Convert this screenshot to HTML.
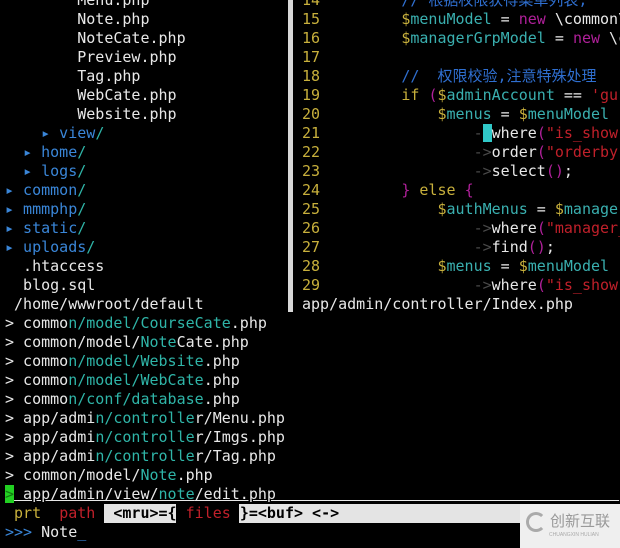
<!DOCTYPE html>
<html><head><meta charset="utf-8"><style>
body{margin:0;width:620px;height:547px;background:#000;overflow:hidden;position:relative;font-family:"DejaVu Sans Mono","Liberation Mono","Noto Sans CJK SC",monospace;font-size:15px;color:#e8e8e8}
#w{position:absolute;left:0;top:1px;width:620px;height:547px}
.r{position:absolute;height:19px;line-height:19px;white-space:pre}
.b{color:#3a86d8}.t{color:#2fb5a8}.y{color:#c8b03c}.m{color:#b0209a}.rd{color:#c0202a}.g{color:#4a4a4a}.c{color:#2f6fd0}.cy{color:#3ab0b0}
.ln{color:#c8b03c}
</style></head><body><div id="w">
<div style="position:absolute;left:288px;top:-1px;width:5px;height:312px;background:#d8d8d8"></div>
<div class="r" style="left:5px;top:-10px">        Menu.php</div>
<div class="r" style="left:5px;top:9px">        Note.php</div>
<div class="r" style="left:5px;top:28px">        NoteCate.php</div>
<div class="r" style="left:5px;top:47px">        Preview.php</div>
<div class="r" style="left:5px;top:66px">        Tag.php</div>
<div class="r" style="left:5px;top:85px">        WebCate.php</div>
<div class="r" style="left:5px;top:104px">        Website.php</div>
<div class="r" style="left:5px;top:123px">    <span class="b">▸ view</span><span class="t">/</span></div>
<div class="r" style="left:5px;top:142px">  <span class="b">▸ home</span><span class="t">/</span></div>
<div class="r" style="left:5px;top:161px">  <span class="b">▸ logs</span><span class="t">/</span></div>
<div class="r" style="left:5px;top:180px"><span class="b">▸ common</span><span class="t">/</span></div>
<div class="r" style="left:5px;top:199px"><span class="b">▸ mmmphp</span><span class="t">/</span></div>
<div class="r" style="left:5px;top:218px"><span class="b">▸ static</span><span class="t">/</span></div>
<div class="r" style="left:5px;top:237px"><span class="b">▸ uploads</span><span class="t">/</span></div>
<div class="r" style="left:5px;top:256px">  .htaccess</div>
<div class="r" style="left:5px;top:275px">  blog.sql</div>
<div class="r" style="left:5px;top:294px"> /home/wwwroot/default</div>
<div class="r" style="left:302px;top:-10px"><span class="ln">14</span>         <span class="c">// 根据权限获得菜单列表,</span></div>
<div class="r" style="left:302px;top:9px"><span class="ln">15</span>         <span class="y">$</span><span class="cy">menuModel</span> = <span class="m">new</span> \common\</div>
<div class="r" style="left:302px;top:28px"><span class="ln">16</span>         <span class="y">$</span><span class="cy">managerGrpModel</span> = <span class="m">new</span> \c</div>
<div class="r" style="left:302px;top:47px"><span class="ln">17</span></div>
<div class="r" style="left:302px;top:66px"><span class="ln">18</span>         <span class="c">//  权限校验,注意特殊处理</span></div>
<div class="r" style="left:302px;top:85px"><span class="ln">19</span>         <span class="y">if</span> <span class="m">(</span><span class="y">$</span><span class="cy">adminAccount</span> == <span class="rd">'gu</span></div>
<div class="r" style="left:302px;top:104px"><span class="ln">20</span>             <span class="y">$</span><span class="cy">menus</span> = <span class="y">$</span><span class="cy">menuModel</span></div>
<div class="r" style="left:302px;top:123px"><span class="ln">21</span>                 <span class="g">-</span><span style="background:#30c8c8;color:#30c8c8">&gt;</span>where<span class="m">(</span><span class="rd">"is_show</span></div>
<div class="r" style="left:302px;top:142px"><span class="ln">22</span>                 <span class="g">-&gt;</span>order<span class="m">(</span><span class="rd">"orderby</span></div>
<div class="r" style="left:302px;top:161px"><span class="ln">23</span>                 <span class="g">-&gt;</span>select<span class="m">()</span>;</div>
<div class="r" style="left:302px;top:180px"><span class="ln">24</span>         <span class="m">}</span> <span class="y">else</span> <span class="m">{</span></div>
<div class="r" style="left:302px;top:199px"><span class="ln">25</span>             <span class="y">$</span><span class="cy">authMenus</span> = <span class="y">$</span><span class="cy">manager</span></div>
<div class="r" style="left:302px;top:218px"><span class="ln">26</span>                 <span class="g">-&gt;</span>where<span class="m">(</span><span class="rd">"manager_</span></div>
<div class="r" style="left:302px;top:237px"><span class="ln">27</span>                 <span class="g">-&gt;</span>find<span class="m">()</span>;</div>
<div class="r" style="left:302px;top:256px"><span class="ln">28</span>             <span class="y">$</span><span class="cy">menus</span> = <span class="y">$</span><span class="cy">menuModel</span></div>
<div class="r" style="left:302px;top:275px"><span class="ln">29</span>                 <span class="g">-&gt;</span>where<span class="m">(</span><span class="rd">"is_show</span></div>
<div class="r" style="left:302px;top:294px">app/admin/controller/Index.php</div>
<div class="r" style="left:5px;top:313px">&gt; commo<span class="t">n/model/CourseCate</span>.php</div>
<div class="r" style="left:5px;top:332px">&gt; common/model/<span class="t">Note</span>Cate.php</div>
<div class="r" style="left:5px;top:351px">&gt; commo<span class="t">n/model/Website</span>.php</div>
<div class="r" style="left:5px;top:370px">&gt; commo<span class="t">n/model/WebCate</span>.php</div>
<div class="r" style="left:5px;top:389px">&gt; commo<span class="t">n/conf/database</span>.php</div>
<div class="r" style="left:5px;top:408px">&gt; app/admi<span class="t">n/controlle</span>r/Menu.php</div>
<div class="r" style="left:5px;top:427px">&gt; app/admi<span class="t">n/controlle</span>r/Imgs.php</div>
<div class="r" style="left:5px;top:446px">&gt; app/admi<span class="t">n/controlle</span>r/Tag.php</div>
<div class="r" style="left:5px;top:465px">&gt; common/model/<span class="t">Note</span>.php</div>
<div class="r" style="left:5px;top:484px"><span style="background:#22d022;color:#117711">&gt;</span><span style="text-decoration:underline"> app/admin/view/<span class="t">note</span>/edit.php                                      </span></div>
<div style="position:absolute;left:104px;top:503px;width:516px;height:19px;background:#e4e4e4"></div>
<div style="position:absolute;left:176px;top:503px;width:63px;height:19px;background:#000"></div>
<div class="r" style="left:5px;top:503px;font-weight:bold"> <span class="y" style="font-weight:normal">prt</span>  <span class="rd" style="font-weight:normal">path</span>  <span style="color:#000">&lt;mru&gt;={</span> <span class="rd" style="font-weight:normal">files</span> <span style="color:#000">}=&lt;buf&gt; &lt;-&gt;</span></div>
<div class="r" style="left:5px;top:522px"><span class="b">&gt;&gt;&gt;</span> Note<span class="b">_</span></div>
<div style="position:absolute;left:520px;top:503px;width:100px;height:44px;background:#efefef"></div>
<div style="position:absolute;left:526px;top:511px;width:20px;height:20px;border:3px solid #aaa;border-radius:50%;border-right-color:transparent;box-sizing:border-box"></div>
<div class="r" style="left:550px;top:510px;color:#999;font-family:'Noto Sans CJK SC',sans-serif;font-size:15px">创新互联</div>
<div style="position:absolute;left:549px;top:531px;font-size:5px;color:#aaa;font-family:'Liberation Sans',sans-serif">CHUANGXIN HULIAN</div>
</div></body></html>
